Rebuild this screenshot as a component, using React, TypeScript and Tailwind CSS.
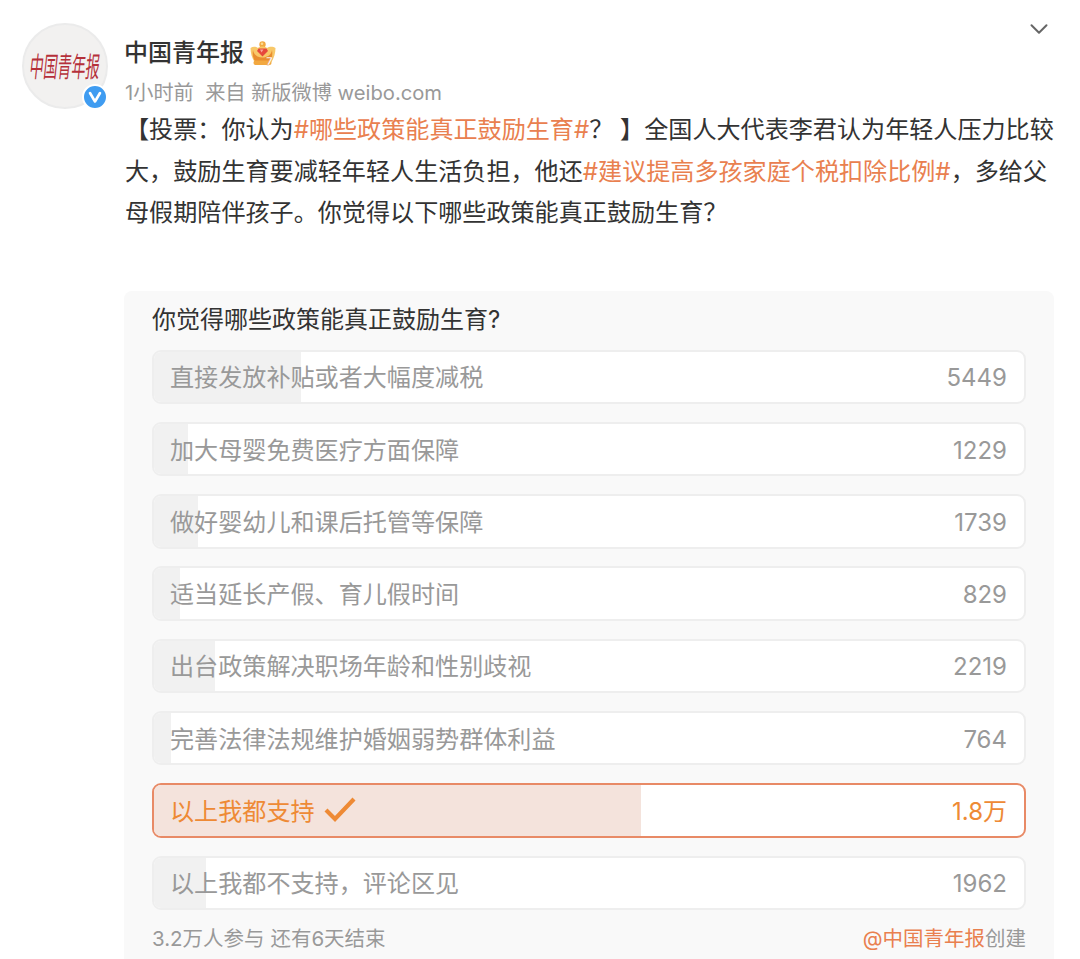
import React from 'react';
import { ChevronDown } from 'lucide-react';

const FONT = "font-['Inter','Noto_Sans_CJK_SC',sans-serif]";

const options = [
  { label: '直接发放补贴或者大幅度减税', count: '5449', fill: 'w-[147px]' },
  { label: '加大母婴免费医疗方面保障', count: '1229', fill: 'w-[34px]' },
  { label: '做好婴幼儿和课后托管等保障', count: '1739', fill: 'w-[44px]' },
  { label: '适当延长产假、育儿假时间', count: '829', fill: 'w-[26px]' },
  { label: '出台政策解决职场年龄和性别歧视', count: '2219', fill: 'w-[61px]' },
  { label: '完善法律法规维护婚姻弱势群体利益', count: '764', fill: 'w-[17px]' },
  { label: '以上我都支持', count: '1.8万', fill: 'w-[487px]', picked: true },
  { label: '以上我都不支持，评论区见', count: '1962', fill: 'w-[52px]' },
];

const Crown = () => (
  <svg viewBox="0 0 26 25" className="w-[26px] h-[25px] shrink-0">
    <circle cx="12.5" cy="3.4" r="3.2" fill="#f2a93f" />
    <circle cx="12" cy="2.8" r="1.3" fill="#fbdc92" />
    <path d="M0.5 7 C3 5 6 5.5 8 7 C10 5 15 5 17 7 C19 5.5 23 5 25.5 7 C25.5 12 24 17 21.5 21 H4.5 C2 17 0.5 12 0.5 7 Z" fill="#f8c869" />
    <path d="M3 9 C4 14.5 8 16.5 12.5 16.5 C17 16.5 21 14.5 22 9 C23 14 21.5 18 20 20 H5 C3.5 18 2 14 3 9 Z" fill="#e98d2f" />
    <path d="M8.5 7.5 H16.5 L18 10 L12.5 15.5 L7 10 Z" fill="#e6483c" />
    <path d="M10 8.5 H13.5 L11.5 11.5 Z" fill="#f9a79a" />
    <rect x="3.5" y="19.5" width="18" height="4.5" rx="2" fill="#f2a840" />
    <text x="19.5" y="23.5" textAnchor="middle" fontSize="11" fontWeight="800" fill="#ffffff" stroke="#e8892c" strokeWidth="0.4">
      7
    </text>
  </svg>
);

const Avatar = () => (
  <div className="relative w-[86px] h-[86px] shrink-0">
    <div className="w-full h-full rounded-full bg-[#f2f1f0] border-2 border-[#ebebeb] flex items-center justify-center overflow-hidden">
      <span className="text-[#b5303a] text-[14px] font-normal whitespace-nowrap scale-y-[2] -skew-x-12 -translate-y-[1px]">
        中国青年报
      </span>
    </div>
    <div className="absolute right-[0px] bottom-[-1px] w-[26px] h-[26px] rounded-full bg-[#3f9cf1] border-2 border-white flex items-center justify-center">
      <svg viewBox="0 0 16 16" className="w-[16px] h-[16px]">
        <path d="M3 4 L8 12.5 L13 4" fill="none" stroke="#fff" strokeWidth="2.6" strokeLinecap="round" strokeLinejoin="round" />
      </svg>
    </div>
  </div>
);

const Option = ({ label, count, fill, picked }: { label: string; count: string; fill: string; picked?: boolean }) => (
  <div
    className={`relative h-[54.5px] rounded-[9px] border-2 overflow-hidden bg-white flex items-center justify-between pl-[16px] pr-[17px] pt-[3px] ${
      picked ? 'border-[#e88a66]' : 'border-[#eeeeee]'
    }`}
  >
    <div className={`absolute left-0 top-0 bottom-0 ${fill} ${picked ? 'bg-[#f4e3dc]' : 'bg-[#f1f1f1]'}`} />
    <div className={`relative flex items-center gap-[9px] text-[24.1px] leading-none ${picked ? 'text-[#ee8a35]' : 'text-[#999999]'}`}>
      <span>{label}</span>
      {picked && (
        <svg viewBox="0 0 32 26" className="w-[32px] h-[26px] -mt-[4px]">
          <path d="M2 13 L11 22 L30 2" fill="none" stroke="#ee8a35" strokeWidth="4.2" strokeLinejoin="miter" />
        </svg>
      )}
    </div>
    <span className={`relative text-[24px] leading-none ${picked ? 'text-[#ee8a35]' : 'text-[#999999]'}`}>{count}</span>
  </div>
);

export default function App() {
  return (
    <div className={`${FONT} relative w-[1080px] h-[959px] overflow-hidden bg-white`}>
      <ChevronDown className="absolute left-[1024px] top-[14px] w-[30px] h-[30px] text-[#666666]" strokeWidth={1.6} />

      <div className="flex pl-[22px] pt-[23px] gap-[17px]">
        <Avatar />
        <div className="flex flex-col pt-[12px]">
          <div className="flex items-center gap-[6px] h-[36px] -ml-[1px]">
            <span className="text-[24px] font-medium text-[#333333] leading-none">中国青年报</span>
            <Crown />
          </div>
          <div className="mt-[10px] text-[20.2px] leading-[24px] text-[#999999] whitespace-nowrap">
            1小时前&nbsp; 来自 新版微博 weibo.com
          </div>
        </div>
      </div>

      <p className="ml-[125px] w-[940px] text-[24.1px] leading-[41.5px] text-[#333333] whitespace-nowrap">
        【投票：你认为<span className="text-[#e9804f]">#哪些政策能真正鼓励生育#</span>？ 】全国人大代表李君认为年轻人压力比较
        <br />
        大，鼓励生育要减轻年轻人生活负担，他还<span className="text-[#e9804f]">#建议提高多孩家庭个税扣除比例#</span>，多给父
        <br />
        母假期陪伴孩子。你觉得以下哪些政策能真正鼓励生育？
      </p>

      <section className="ml-[124px] mt-[57px] w-[930px] rounded-t-[8px] bg-[#f9f9f9] px-[28px] pt-[12px]">
        <h3 className="text-[24px] leading-[34px] font-normal text-[#333333]">你觉得哪些政策能真正鼓励生育?</h3>
        <div className="mt-[13px] flex flex-col gap-[17.8px]">
          {options.map((o) => (
            <Option key={o.label} {...o} />
          ))}
        </div>
        <div className="mt-[15px] flex justify-between text-[20.5px] leading-[28px] text-[#999999] pb-[10px]">
          <span>3.2万人参与 还有6天结束</span>
          <span>
            <span className="text-[#e9804f]">@中国青年报</span>创建
          </span>
        </div>
      </section>
    </div>
  );
}
